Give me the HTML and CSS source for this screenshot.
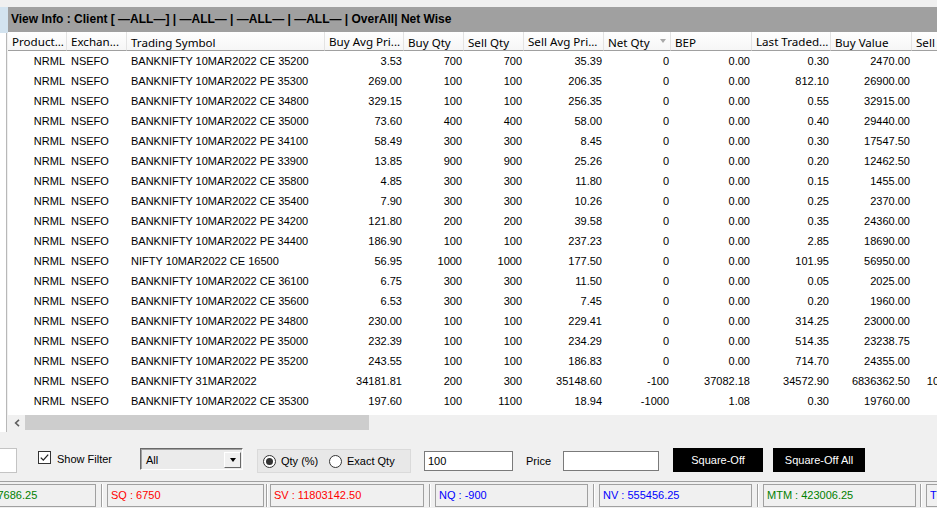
FILE: index.html
```html
<!DOCTYPE html>
<html lang="en">
<head>
    <meta charset="UTF-8">
    <meta name="viewport" content="width=device-width, initial-scale=1.0">
    <title>Net Position</title>
    <link rel="stylesheet" href="styles.css">
</head>
<body>
    <div class="main">
        <div class="side">
            <div class="side-top"></div>
            <div class="side-body"></div>
        </div>

        <div class="grid">
            <div class="grid-title">View Info : Client [ —ALL—] | —ALL— | —ALL— | —ALL— | OverAll| Net Wise</div>

            <div class="grid-body">
                <table class="positions">
                    <colgroup>
                        <col style="width:59px"><col style="width:60px"><col style="width:198px">
                        <col style="width:79px"><col style="width:60px"><col style="width:60px">
                        <col style="width:80px"><col style="width:67px"><col style="width:81px">
                        <col style="width:79px"><col style="width:81px"><col style="width:81px">
                    </colgroup>
                    <thead>
                        <tr>
                            <th class="trunc">Product...</th>
                            <th class="trunc">Exchan...</th>
                            <th>Trading Symbol</th>
                            <th class="trunc">Buy Avg Pri...</th>
                            <th>Buy Qty</th>
                            <th>Sell Qty</th>
                            <th class="trunc">Sell Avg Pri...</th>
                            <th class="sorted">Net Qty</th>
                            <th>BEP</th>
                            <th class="trunc">Last Traded...</th>
                            <th>Buy Value</th>
                            <th>Sell Value</th>
                        </tr>
                    </thead>
                    <tbody>
                        <tr><td class="r">NRML</td><td>NSEFO</td><td>BANKNIFTY 10MAR2022 CE 35200</td><td class="r">3.53</td><td class="r">700</td><td class="r">700</td><td class="r">35.39</td><td class="r">0</td><td class="r">0.00</td><td class="r">0.30</td><td class="r">2470.00</td><td class="r">24773.00</td></tr>
                        <tr><td class="r">NRML</td><td>NSEFO</td><td>BANKNIFTY 10MAR2022 PE 35300</td><td class="r">269.00</td><td class="r">100</td><td class="r">100</td><td class="r">206.35</td><td class="r">0</td><td class="r">0.00</td><td class="r">812.10</td><td class="r">26900.00</td><td class="r">20635.00</td></tr>
                        <tr><td class="r">NRML</td><td>NSEFO</td><td>BANKNIFTY 10MAR2022 CE 34800</td><td class="r">329.15</td><td class="r">100</td><td class="r">100</td><td class="r">256.35</td><td class="r">0</td><td class="r">0.00</td><td class="r">0.55</td><td class="r">32915.00</td><td class="r">25635.00</td></tr>
                        <tr><td class="r">NRML</td><td>NSEFO</td><td>BANKNIFTY 10MAR2022 CE 35000</td><td class="r">73.60</td><td class="r">400</td><td class="r">400</td><td class="r">58.00</td><td class="r">0</td><td class="r">0.00</td><td class="r">0.40</td><td class="r">29440.00</td><td class="r">23200.00</td></tr>
                        <tr><td class="r">NRML</td><td>NSEFO</td><td>BANKNIFTY 10MAR2022 PE 34100</td><td class="r">58.49</td><td class="r">300</td><td class="r">300</td><td class="r">8.45</td><td class="r">0</td><td class="r">0.00</td><td class="r">0.30</td><td class="r">17547.50</td><td class="r">2535.00</td></tr>
                        <tr><td class="r">NRML</td><td>NSEFO</td><td>BANKNIFTY 10MAR2022 PE 33900</td><td class="r">13.85</td><td class="r">900</td><td class="r">900</td><td class="r">25.26</td><td class="r">0</td><td class="r">0.00</td><td class="r">0.20</td><td class="r">12462.50</td><td class="r">22734.00</td></tr>
                        <tr><td class="r">NRML</td><td>NSEFO</td><td>BANKNIFTY 10MAR2022 CE 35800</td><td class="r">4.85</td><td class="r">300</td><td class="r">300</td><td class="r">11.80</td><td class="r">0</td><td class="r">0.00</td><td class="r">0.15</td><td class="r">1455.00</td><td class="r">3540.00</td></tr>
                        <tr><td class="r">NRML</td><td>NSEFO</td><td>BANKNIFTY 10MAR2022 CE 35400</td><td class="r">7.90</td><td class="r">300</td><td class="r">300</td><td class="r">10.26</td><td class="r">0</td><td class="r">0.00</td><td class="r">0.25</td><td class="r">2370.00</td><td class="r">3078.00</td></tr>
                        <tr><td class="r">NRML</td><td>NSEFO</td><td>BANKNIFTY 10MAR2022 PE 34200</td><td class="r">121.80</td><td class="r">200</td><td class="r">200</td><td class="r">39.58</td><td class="r">0</td><td class="r">0.00</td><td class="r">0.35</td><td class="r">24360.00</td><td class="r">7916.00</td></tr>
                        <tr><td class="r">NRML</td><td>NSEFO</td><td>BANKNIFTY 10MAR2022 PE 34400</td><td class="r">186.90</td><td class="r">100</td><td class="r">100</td><td class="r">237.23</td><td class="r">0</td><td class="r">0.00</td><td class="r">2.85</td><td class="r">18690.00</td><td class="r">23723.00</td></tr>
                        <tr><td class="r">NRML</td><td>NSEFO</td><td>NIFTY 10MAR2022 CE 16500</td><td class="r">56.95</td><td class="r">1000</td><td class="r">1000</td><td class="r">177.50</td><td class="r">0</td><td class="r">0.00</td><td class="r">101.95</td><td class="r">56950.00</td><td class="r">177500.00</td></tr>
                        <tr><td class="r">NRML</td><td>NSEFO</td><td>BANKNIFTY 10MAR2022 CE 36100</td><td class="r">6.75</td><td class="r">300</td><td class="r">300</td><td class="r">11.50</td><td class="r">0</td><td class="r">0.00</td><td class="r">0.05</td><td class="r">2025.00</td><td class="r">3450.00</td></tr>
                        <tr><td class="r">NRML</td><td>NSEFO</td><td>BANKNIFTY 10MAR2022 CE 35600</td><td class="r">6.53</td><td class="r">300</td><td class="r">300</td><td class="r">7.45</td><td class="r">0</td><td class="r">0.00</td><td class="r">0.20</td><td class="r">1960.00</td><td class="r">2235.00</td></tr>
                        <tr><td class="r">NRML</td><td>NSEFO</td><td>BANKNIFTY 10MAR2022 PE 34800</td><td class="r">230.00</td><td class="r">100</td><td class="r">100</td><td class="r">229.41</td><td class="r">0</td><td class="r">0.00</td><td class="r">314.25</td><td class="r">23000.00</td><td class="r">22941.00</td></tr>
                        <tr><td class="r">NRML</td><td>NSEFO</td><td>BANKNIFTY 10MAR2022 PE 35000</td><td class="r">232.39</td><td class="r">100</td><td class="r">100</td><td class="r">234.29</td><td class="r">0</td><td class="r">0.00</td><td class="r">514.35</td><td class="r">23238.75</td><td class="r">23429.00</td></tr>
                        <tr><td class="r">NRML</td><td>NSEFO</td><td>BANKNIFTY 10MAR2022 PE 35200</td><td class="r">243.55</td><td class="r">100</td><td class="r">100</td><td class="r">186.83</td><td class="r">0</td><td class="r">0.00</td><td class="r">714.70</td><td class="r">24355.00</td><td class="r">18683.00</td></tr>
                        <tr><td class="r">NRML</td><td>NSEFO</td><td>BANKNIFTY 31MAR2022</td><td class="r">34181.81</td><td class="r">200</td><td class="r">300</td><td class="r">35148.60</td><td class="r">-100</td><td class="r">37082.18</td><td class="r">34572.90</td><td class="r">6836362.50</td><td class="r">10544580.00</td></tr>
                        <tr><td class="r">NRML</td><td>NSEFO</td><td>BANKNIFTY 10MAR2022 CE 35300</td><td class="r">197.60</td><td class="r">100</td><td class="r">1100</td><td class="r">18.94</td><td class="r">-1000</td><td class="r">1.08</td><td class="r">0.30</td><td class="r">19760.00</td><td class="r">20834.00</td></tr>
                    </tbody>
                </table>
            </div>

            <div class="hscroll">
                <div class="hscroll-btn">
                    <svg width="6" height="8" viewBox="0 0 6 8"><polyline points="5,0.8 1.6,4 5,7.2" fill="none" stroke="#606060" stroke-width="1.6"/></svg>
                </div>
                <div class="hscroll-thumb"></div>
            </div>
        </div>
    </div>

    <div class="controls">
        <div class="cut-box"></div>

        <label class="filter">
            <span class="check-box">
                <svg width="11" height="11" viewBox="0 0 11 11"><polyline points="1.8,5.6 4.3,8.1 9.2,2.6" fill="none" stroke="#222" stroke-width="1.3"/></svg>
            </span>
            <span class="filter-text">Show Filter</span>
        </label>

        <div class="combo">
            <span class="combo-text">All</span>
            <span class="combo-btn"><span class="combo-arrow"></span></span>
        </div>

        <div class="radios">
            <div class="radio-item first">
                <span class="radio on"><span class="radio-dot"></span></span>
                <span>Qty (%)</span>
            </div>
            <div class="radio-item">
                <span class="radio"></span>
                <span>Exact Qty</span>
            </div>
        </div>

        <div class="text-box qty-box">100</div>
        <div class="price-label">Price</div>
        <div class="text-box price-box"></div>

        <div class="btn btn-off">Square-Off</div>
        <div class="btn btn-off-all">Square-Off All</div>
    </div>

    <div class="status">
        <div class="panel p1 green">BV : 11247686.25</div>
        <div class="sep"></div>
        <div class="panel p2 red">SQ : 6750</div>
        <div class="sep narrow"></div>
        <div class="panel p3 red">SV : 11803142.50</div>
        <div class="sep"></div>
        <div class="panel p4 blue">NQ : -900</div>
        <div class="sep"></div>
        <div class="panel p5 blue">NV : 555456.25</div>
        <div class="sep"></div>
        <div class="panel p6 green">MTM : 423006.25</div>
        <div class="sep last"></div>
        <div class="panel p7 blue">TQ : 12600</div>
    </div>
</body>
</html>
```

FILE: styles.css
```css
* {
    box-sizing: border-box;
}

body {
    margin: 0;
    width: 937px;
    height: 508px;
    overflow: hidden;
    background: #f0f0f0;
    font-family: "Liberation Sans", Arial, sans-serif;
    font-size: 11px;
    color: #000;
}

/* zone grille */
.main {
    display: flex;
    padding-top: 7px;
    height: 432px;
}

.side {
    width: 8px;
    flex-shrink: 0;
    display: flex;
    flex-direction: column;
}

.side-top {
    height: 26px;
    background: #d3e3ef;
}

.side-body {
    flex: 1;
    background: #fff;
    border-right: 1px solid #b8b8b8;
    margin-right: 1px;
}

.grid {
    flex: 1;
    min-width: 0;
    display: flex;
    flex-direction: column;
}

.grid-title {
    height: 25px;
    line-height: 25px;
    background: #a0a0a0;
    font-size: 12px;
    font-weight: bold;
    padding-left: 3px;
    white-space: nowrap;
    overflow: hidden;
}

.grid-body {
    height: 383px;
    background: #fff;
    overflow: hidden;
}

.positions {
    table-layout: fixed;
    width: 985px;
    border-collapse: separate;
    border-spacing: 0;
}

.positions th {
    height: 19px;
    padding: 3px 4px 0;
    line-height: 15px;
    font-family: "Noto Sans", sans-serif;
    font-size: 11.6px;
    font-weight: normal;
    text-align: left;
    white-space: nowrap;
    overflow: hidden;
    background: linear-gradient(#ffffff, #f6f6f6);
    border-right: 1px solid #e3e3e3;
    border-bottom: 1px solid #a0a0a0;
}

.positions th.trunc {
    padding-top: 1px;
}

.positions th.sorted {
    position: relative;
}

.positions th.sorted::after {
    content: '';
    position: absolute;
    top: 7px;
    right: 4px;
    border-style: solid;
    border-width: 4px 3.5px 0;
    border-color: #a8a8a8 transparent transparent;
}

.positions td {
    height: 20px;
    padding: 0 2px 0 4px;
    line-height: 20px;
    white-space: nowrap;
    overflow: hidden;
}

.positions td.r {
    text-align: right;
}

.hscroll {
    height: 17px;
    display: flex;
}

.hscroll-btn {
    width: 17px;
    height: 15px;
    display: flex;
    align-items: center;
    justify-content: center;
}

.hscroll-thumb {
    width: 344px;
    height: 15px;
    background: #cdcdcd;
}

/* barre de commandes */
.controls {
    height: 49px;
    padding-top: 16px;
    display: flex;
    align-items: flex-start;
}

.cut-box {
    width: 17px;
    height: 25px;
    background: #fff;
    border: 1px solid #c4c4c4;
    border-left: none;
    flex-shrink: 0;
}

.filter {
    display: flex;
    align-items: flex-start;
    gap: 6px;
    width: 102px;
    margin-left: 21px;
    margin-top: 3px;
}

.check-box {
    width: 13px;
    height: 13px;
    border: 1px solid #333;
    background: #fff;
    display: flex;
    align-items: center;
    justify-content: center;
}

.filter-text {
    line-height: 16px;
}

.combo {
    width: 103px;
    height: 22px;
    display: flex;
    align-items: center;
    justify-content: space-between;
    background: #ebebeb;
    border-top: 1px solid #696969;
    border-left: 1px solid #696969;
    border-right: 1px solid #fff;
    border-bottom: 1px solid #fff;
    box-shadow: inset 1px 1px 0 #a0a0a0;
    padding: 1px 1px 0 5px;
}

.combo-text {
    line-height: 18px;
}

.combo-btn {
    width: 17px;
    height: 16px;
    background: #f0f0f0;
    border-top: 1px solid #fff;
    border-left: 1px solid #fff;
    border-right: 1px solid #696969;
    border-bottom: 1px solid #696969;
    display: flex;
    align-items: center;
    justify-content: center;
}

.combo-arrow {
    border-style: solid;
    border-width: 4px 3.5px 0;
    border-color: #000 transparent transparent;
}

.radios {
    width: 154px;
    height: 24px;
    margin-left: 14px;
    margin-top: 1px;
    background: #e8e8e8;
    border: 1px solid #dadada;
    display: flex;
    align-items: center;
    padding-left: 5px;
}

.radio-item {
    display: flex;
    align-items: center;
    gap: 5px;
}

.radio-item.first {
    width: 66px;
}

.radio {
    width: 13px;
    height: 13px;
    border: 1px solid #333;
    border-radius: 50%;
    background: #fff;
    display: flex;
    align-items: center;
    justify-content: center;
}

.radio-dot {
    width: 7px;
    height: 7px;
    border-radius: 50%;
    background: #333;
}

.text-box {
    height: 20px;
    margin-top: 3px;
    background: #fff;
    border: 1px solid #7a7a7a;
    padding-left: 3px;
    line-height: 18px;
}

.qty-box {
    width: 89px;
    margin-left: 13px;
}

.price-label {
    width: 37px;
    margin-left: 13px;
    margin-top: 3px;
    line-height: 20px;
}

.price-box {
    width: 96px;
}

.btn {
    height: 24px;
    line-height: 24px;
    background: #000;
    color: #fff;
    text-align: center;
}

.btn-off {
    width: 90px;
    margin-left: 14px;
}

.btn-off-all {
    width: 92px;
    margin-left: 10px;
}

/* barre d'etat */
.status {
    height: 27px;
    border-top: 1px solid #a0a0a0;
    padding-top: 2px;
    display: flex;
}

.panel {
    height: 23px;
    flex-shrink: 0;
    border: 1px solid #a0a0a0;
    padding-left: 3px;
    line-height: 21px;
    white-space: nowrap;
    overflow: hidden;
}

.p1 { width: 150px; margin-left: -54px; }
.p2 { width: 157px; }
.p3 { width: 154px; }
.p4 { width: 153px; }
.p5 { width: 153px; }
.p6 { width: 153px; }
.p7 { width: 153px; }

.sep {
    width: 11px;
    flex-shrink: 0;
    display: flex;
    justify-content: center;
}

.sep::before {
    content: '';
    width: 1px;
    height: 23px;
    background: #a0a0a0;
    border-right: 1px solid #fff;
    box-sizing: content-box;
}

.sep.narrow { width: 6px; }
.sep.last { width: 10px; }

.green { color: #008000; }
.red { color: #ff0000; }
.blue { color: #0000ff; }
```
